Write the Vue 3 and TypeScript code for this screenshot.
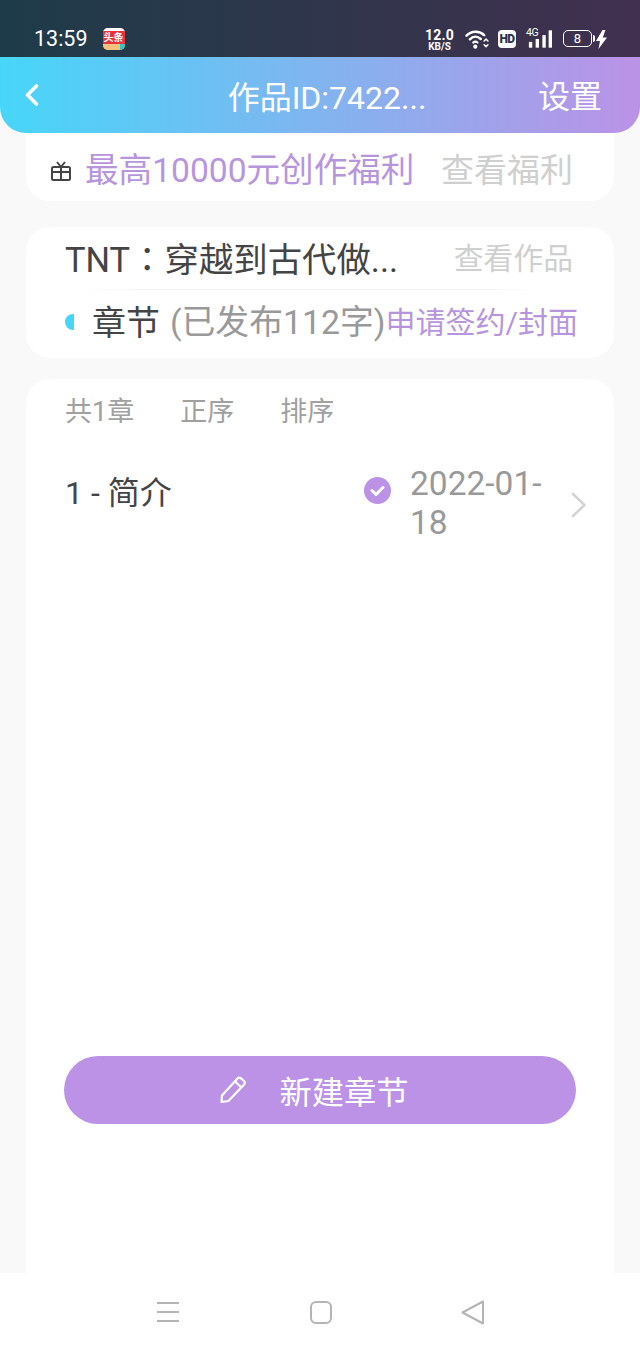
<script setup lang="ts">
const sortLabels: string[] = ['共1章', '正序', '排序']
</script>

<template>
  <div class="page">
    <div class="status">
      <div class="status-left">
        <span class="time">13:59</span>
        <span class="app-icon">
          <span class="app-red">头条</span>
          <span class="app-band"></span>
        </span>
      </div>
      <div class="status-right">
        <span class="speed"><b>12.0</b><i>KB/S</i></span>
        <svg class="wifi" width="24" height="19" viewBox="0 0 25 20" fill="none" stroke="#fff" stroke-linecap="round">
          <path d="M1.5 6C6.500 .8 15 .5 20 5.500" stroke-width="2.600" />
          <path d="M5 9.800C8.500 6.300 13 6.300 16.500 9.500" stroke-width="2.600" />
          <path d="M8.500 13.300C10 12 11.500 12 13 13.200" stroke-width="2.200" />
          <circle cx="10.700" cy="17.500" r="2.200" fill="#fff" stroke="none" />
          <path d="M20 11.500l2-2 2 2M20 15.500l2 2 2-2" stroke-width="1.600" />
        </svg>
        <span class="hd">HD</span>
        <span class="net">
          <span class="net-label">4G</span>
          <svg width="26" height="18" viewBox="0 0 27 18" fill="#fff">
            <rect x="3" y="12" width="3.500" height="6" />
            <rect x="10" y="9" width="3.500" height="9" />
            <rect x="17" y="5" width="3.500" height="13" />
            <rect x="23.500" y="0" width="3.500" height="18" />
          </svg>
        </span>
        <span class="battery"><span class="battery-num">8</span></span>
        <svg class="bolt" width="11" height="19" viewBox="0 0 11 19" fill="#fff">
          <path d="M6.500 0L0 11h4L2.500 19 11 7.500H6.800L9.500 0z" />
        </svg>
      </div>
    </div>

    <header class="header">
      <svg class="back" width="16" height="24" viewBox="0 0 16 24" fill="none" stroke="#fff" stroke-width="3.600" stroke-linecap="round" stroke-linejoin="round">
        <path d="M12.500 3L3.500 12l9 9" />
      </svg>
      <div class="title">作品ID:7422...</div>
      <div class="settings">设置</div>
    </header>

    <main class="content">
      <section class="card welfare">
        <svg class="gift" width="22" height="22" viewBox="0 0 22 22" fill="none" stroke="#444" stroke-width="2">
          <rect x="2" y="7" width="18" height="13" rx="1.500" />
          <path d="M2 12h18M11 7v13M11 7L7 2M11 7l4-5" />
        </svg>
        <span class="welfare-text">最高10000元创作福利</span>
        <span class="welfare-link">查看福利</span>
      </section>

      <section class="card work">
        <div class="work-top">
          <span class="work-name">TNT<span class="colon">：</span>穿越到古代做...</span>
          <span class="work-link">查看作品</span>
        </div>
        <div class="work-line"></div>
        <div class="work-bottom">
          <span class="half-dot"></span>
          <span class="chapter-label">章节</span>
          <span class="chapter-count">(已发布112字)</span>
          <span class="chapter-link">申请签约/封面</span>
        </div>
      </section>

      <section class="card list">
        <div class="sort-row">
          <span v-for="label in sortLabels" :key="label">{{ label }}</span>
        </div>
        <div class="chapter-row">
          <span class="chapter-title">1 - 简介</span>
          <svg class="check" width="27" height="27" viewBox="0 0 27 27">
            <circle cx="13.500" cy="13.500" r="13.500" fill="#bb92e6" />
            <path d="M8 13.500l4 4 7-7" fill="none" stroke="#fff" stroke-width="3" stroke-linecap="round" stroke-linejoin="round" />
          </svg>
          <span class="chapter-date">2022-01-18</span>
          <svg class="chevron" width="16" height="26" viewBox="0 0 16 26" fill="none" stroke="#d4d4d4" stroke-width="2.600" stroke-linecap="round" stroke-linejoin="round">
            <path d="M2 2l11.500 11L2 24" />
          </svg>
        </div>
        <button class="new-chapter" type="button">
          <svg width="28" height="28" viewBox="0 0 28 28" fill="none" stroke="#fff" stroke-width="2.200" stroke-linejoin="round">
            <path d="M2.500 26l.5-6.500L18.500 2.500c1-1 2.500-1 3.500-.1l3 2.600c1 1 1 2.400.1 3.400L9.500 25z" />
            <path d="M16 5.500l6.500 6" />
          </svg>
          <span>新建章节</span>
        </button>
      </section>
    </main>

    <nav class="nav">
      <svg width="24" height="22" viewBox="0 0 24 22" stroke="#b4b4b4" stroke-width="2">
        <path d="M1 2h22M1 11h22M1 20h22" />
      </svg>
      <svg width="22" height="23" viewBox="0 0 22 23" fill="none" stroke="#b4b4b4" stroke-width="2">
        <rect x="1" y="1" width="20" height="21" rx="5" />
      </svg>
      <svg class="nav-back" width="24" height="25" viewBox="0 0 24 25" fill="none" stroke="#b4b4b4" stroke-width="2" stroke-linejoin="round">
        <path d="M22 1.500L1.500 12.500 22 23.500z" />
      </svg>
    </nav>
  </div>
</template>

<style>
html,
body {
  margin: 0;
  background: #f9f9f9;
}
</style>

<style scoped>
.page {
  width: 640px;
  height: 1351px;
  display: flex;
  flex-direction: column;
  overflow: hidden;
  background: #f9f9f9;
  font-family: Roboto, "Noto Sans CJK SC", sans-serif;
}

.status {
  height: 57px;
  flex: none;
  display: flex;
  justify-content: space-between;
  align-items: flex-end;
  box-sizing: border-box;
  padding: 0 33px 5px 34px;
  background: linear-gradient(90deg, #1e3b48, #41304f);
  color: #fff;
}
.status-left {
  display: flex;
  align-items: center;
  gap: 15px;
}
.time {
  font-size: 21.500px;
  line-height: 26px;
}
.app-icon {
  width: 22px;
  height: 22px;
  border-radius: 5px;
  overflow: hidden;
  display: flex;
  flex-direction: column;
  background: #f2c27a;
}
.app-red {
  height: 13px;
  border-top: 3px solid #fff;
  background: #e6333c;
  color: #fff;
  font-size: 10px;
  line-height: 13px;
  font-weight: 700;
  text-align: center;
  white-space: nowrap;
}
.app-band {
  flex: 1;
  background: linear-gradient(90deg, #f3c27c 75%, #36c3c8 75%);
}
.status-right {
  display: flex;
  align-items: flex-end;
}
.speed {
  width: 29px;
  display: flex;
  flex-direction: column;
  align-items: center;
  font-family: Roboto, sans-serif;
  margin-right: 11px;
}
.speed b {
  font-size: 14px;
  line-height: 13px;
  font-weight: 700;
  letter-spacing: 0.2px;
}
.speed i {
  font-size: 10px;
  line-height: 10px;
  font-style: normal;
  font-weight: 700;
}
.wifi {
  margin-right: 9px;
  margin-bottom: 3px;
}
.hd {
  width: 18px;
  height: 18px;
  margin-right: 10px;
  margin-bottom: 4px;
  border-radius: 4px;
  background: #fff;
  color: #2f3350;
  font-size: 12px;
  line-height: 18px;
  font-weight: 900;
  text-align: center;
  letter-spacing: -0.5px;
}
.net {
  width: 26px;
  height: 20px;
  margin-right: 11px;
  margin-bottom: 4px;
  position: relative;
  display: flex;
  align-items: flex-end;
}
.net-label {
  position: absolute;
  left: 0;
  top: 0;
  font-size: 10.500px;
  line-height: 10px;
  letter-spacing: -0.3px;
}
.battery {
  width: 27px;
  height: 15px;
  margin-bottom: 5px;
  margin-right: 4px;
  border: 1.500px solid #fff;
  border-radius: 5px;
  display: flex;
  align-items: center;
  justify-content: center;
  position: relative;
}
.battery::after {
  content: "";
  position: absolute;
  right: -4px;
  top: 4px;
  width: 2px;
  height: 7px;
  border-radius: 0 2px 2px 0;
  background: #fff;
}
.battery-num {
  font-size: 13px;
  line-height: 15px;
}
.bolt {
  margin-bottom: 3px;
}

.header {
  position: relative;
  z-index: 1;
  flex: none;
  height: 76px;
  display: flex;
  align-items: center;
  justify-content: center;
  border-radius: 0 0 26px 26px;
  background: linear-gradient(90deg, #47d6f9, #bb92e6);
  color: #fff;
}
.back {
  position: absolute;
  left: 24px;
  top: 26px;
}
.title {
  font-size: 32px;
  line-height: 44px;
  transform: translate(7px, 3px);
}
.settings {
  position: absolute;
  right: 38px;
  top: 18px;
  font-size: 32px;
  line-height: 44px;
}

.content {
  flex: 1;
  min-height: 0;
  display: flex;
  flex-direction: column;
  margin: 0 26px;
}
.card {
  background: #fff;
  border-radius: 24px;
}

.welfare {
  height: 92px;
  margin-top: -24px;
  box-sizing: border-box;
  padding: 31px 41px 0 24px;
  display: flex;
  align-items: center;
  flex: none;
}
.gift {
  margin-right: 13px;
  flex: none;
}
.welfare-text {
  font-size: 33.600px;
  line-height: 44px;
  color: #b795dd;
  white-space: nowrap;
}
.welfare-link {
  margin-left: auto;
  font-size: 33px;
  line-height: 44px;
  color: #cfcfcf;
  white-space: nowrap;
}

.work {
  flex: none;
  height: 131px;
  margin-top: 26px;
  box-sizing: border-box;
  padding: 10px 37px 0 39px;
  display: flex;
  flex-direction: column;
}
.work-top {
  display: flex;
  justify-content: space-between;
  align-items: center;
  height: 44px;
  padding-right: 4px;
}
.work-name {
  font-size: 34.400px;
  line-height: 44px;
  color: #444;
  white-space: nowrap;
  margin-top: -2px;
}
.colon {
  font-family: "Noto Sans CJK TC", sans-serif;
}
.work-link {
  font-size: 29.800px;
  line-height: 44px;
  color: #cfcfcf;
}
.work-line {
  height: 1px;
  margin: 8px 41px 0 15px;
  background: linear-gradient(90deg, #fff, #f4f4f4 12%, #f4f4f4 92%, #fff);
}
.work-bottom {
  display: flex;
  align-items: center;
  height: 44px;
  margin-top: 11px;
  white-space: nowrap;
}
.half-dot {
  width: 9px;
  height: 16px;
  flex: none;
  border-radius: 9px 0 0 9px;
  background: #47d6f9;
  margin-right: 18px;
  margin-top: -2px;
}
.chapter-label {
  font-size: 34px;
  line-height: 44px;
  color: #444;
  margin-right: 10px;
}
.chapter-count {
  font-size: 33.800px;
  line-height: 44px;
  color: #999;
}
.chapter-link {
  margin-left: auto;
  font-size: 30px;
  line-height: 44px;
  color: #b795dd;
}

.list {
  flex: 1;
  margin-top: 21px;
  border-radius: 24px 24px 0 0;
  display: flex;
  flex-direction: column;
  min-height: 0;
}
.sort-row {
  display: flex;
  gap: 46px;
  padding: 14px 0 0 39px;
  font-size: 27px;
  line-height: 38px;
  color: #a0a0a0;
}
.chapter-row {
  display: flex;
  align-items: flex-start;
  margin-top: 31px;
  padding: 0 27px 0 39px;
}
.chapter-title {
  flex: 1;
  font-size: 32px;
  line-height: 44px;
  color: #444;
  margin-top: 9px;
}
.check {
  margin: 15px 19px 0 1px;
  flex: none;
}
.chapter-date {
  width: 150px;
  font-size: 33.500px;
  line-height: 39px;
  color: #999;
  overflow-wrap: anywhere;
  margin-top: 2px;
}
.chevron {
  margin: 30px 0 0 11px;
  flex: none;
}
.new-chapter {
  margin: 514px 38px 0;
  height: 68px;
  flex: none;
  border: 0;
  border-radius: 34px;
  background: #bb92e6;
  color: #fff;
  display: flex;
  align-items: center;
  justify-content: center;
  gap: 32px;
  font-family: inherit;
  font-size: 32.300px;
  padding: 0 12px 0 0;
}

.nav {
  flex: none;
  height: 78px;
  background: #fff;
  display: flex;
  align-items: center;
  justify-content: center;
  gap: 130px;
}
.nav-back {
  margin-left: -1px;
}
</style>
